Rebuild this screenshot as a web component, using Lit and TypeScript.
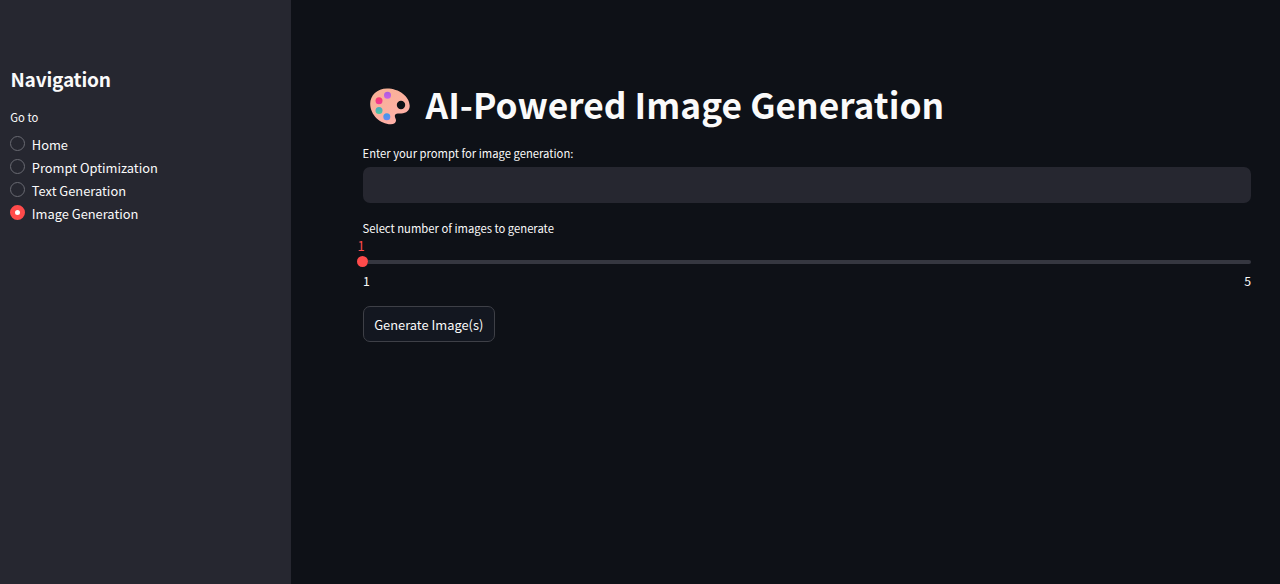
import { LitElement, html, css, svg } from "lit";
import { customElement, state } from "lit/decorators.js";
import { classMap } from "lit/directives/class-map.js";

const palette = svg`
  <defs>
    <linearGradient id="wood" x1="0" y1="0" x2="0.6" y2="1">
      <stop offset="0" stop-color="#f6b193"></stop>
      <stop offset="1" stop-color="#ffb0a8"></stop>
    </linearGradient>
    <linearGradient id="purple" x1="0" y1="0" x2="0" y2="1">
      <stop offset="0" stop-color="#a95ddf"></stop><stop offset="1" stop-color="#cb5fe6"></stop>
    </linearGradient>
    <linearGradient id="pink" x1="0" y1="0" x2="0" y2="1">
      <stop offset="0" stop-color="#f83a6c"></stop><stop offset="1" stop-color="#f03a9c"></stop>
    </linearGradient>
    <linearGradient id="teal" x1="0" y1="0" x2="0" y2="1">
      <stop offset="0" stop-color="#4aa9c0"></stop><stop offset="1" stop-color="#4dc8a0"></stop>
    </linearGradient>
    <linearGradient id="blue" x1="0" y1="0" x2="0" y2="1">
      <stop offset="0" stop-color="#3f9ae8"></stop><stop offset="1" stop-color="#6688f5"></stop>
    </linearGradient>
  </defs>
  <path fill="url(#wood)" fill-rule="evenodd" d="M17 .4C7 .4.2 7.400.2 15.800c0 11 10 20.500 20.600 20.500 3.200 0 5.200-1.400 5.200-3.800 0-1.800-1.200-2.900-1.200-4.500 0-1.700 1.200-2.600 3-2.600h3.500c5 0 8.400-3 8.400-7.600C39.700 8.300 29 .4 17 .4ZM31 12.800a4.200 4.200 0 1 1 0 8.400 4.200 4.200 0 0 1 0-8.400Z"></path>
  <circle cx="17.500" cy="7.300" r="3.500" fill="url(#purple)"></circle>
  <circle cx="9" cy="12.800" r="3.500" fill="url(#pink)"></circle>
  <circle cx="9" cy="22.500" r="3.500" fill="url(#teal)"></circle>
  <circle cx="16.800" cy="28.800" r="3.500" fill="url(#blue)"></circle>
`;

@customElement("app-root")
export class AppRoot extends LitElement {
  @state() private page = "Image Generation";
  private pages = ["Home", "Prompt Optimization", "Text Generation", "Image Generation"];

  static styles = css`
    :host {
      display: flex;
      height: 584px;
      background: #0e1117;
      color: #fafafa;
      font-family: "Noto Sans CJK SC", "Noto Sans", sans-serif;
      font-size: 12.86px;
      overflow: hidden;
    }
    * { box-sizing: border-box; }
    aside {
      width: 290.5px;
      flex: none;
      background: #262730;
      padding: 65px 10px 0;
    }
    h2 {
      margin: 0 0 0 0.5px;
      font-size: 19.1px;
      letter-spacing: -0.2px;
      line-height: 28px;
      font-weight: 600;
    }
    .label { font-size: 11.25px; line-height: 18px; }
    .goto { margin-top: 15px; margin-bottom: 6px; margin-left: 0.3px; }
    .option {
      display: flex;
      align-items: center;
      gap: 6.8px;
      height: 23px;
      white-space: nowrap;
    }
    .option span { margin-top: 1px; }
    .dot {
      width: 15px;
      height: 15px;
      flex: none;
      border-radius: 50%;
      border: 1px solid #696a72;
    }
    .dot.on { border: 5px solid #ff4b4b; background: #fff; }
    main { flex: 1; padding: 79px 29px 0 72px; }
    h1 {
      display: flex;
      align-items: center;
      margin: 0;
      height: 50px;
      font-size: 35.3px;
      letter-spacing: 0.03px;
      line-height: 50px;
      font-weight: 700;
      white-space: nowrap;
    }
    .palette { width: 40px; height: 37px; margin: 4px 16px 0 7px; flex: none; }
    .prompt { margin-top: 15px; }
    .field {
      display: block;
      width: 100%;
      height: 36px;
      margin-top: 4.8px;
      border: 0;
      border-radius: 7px;
      background: #262730;
    }
    .count { margin-top: 16.2px; }
    .value { height: 18px; line-height: 18px; color: #ff4b4b; margin-left: -5px; }
    .slider { display: flex; align-items: center; height: 12px; margin-top: 1px; }
    .thumb {
      width: 11px;
      height: 11px;
      border-radius: 50%;
      background: #ff4b4b;
      margin-left: -5.5px;
      flex: none;
    }
    .track { flex: 1; height: 4px; border-radius: 0 2px 2px 0; background: #353740; }
    .range {
      display: flex;
      justify-content: space-between;
      height: 18px;
      line-height: 18px;
      margin-top: 4px;
      padding-left: 0.5px;
      font-size: 12.3px;
    }
    button {
      display: flex;
      align-items: center;
      justify-content: center;
      margin-top: 16px;
      width: 132.5px;
      height: 36px;
      padding: 1px 0 0;
      border: 1px solid #3e4047;
      border-radius: 7px;
      background: #131720;
      color: inherit;
      font: inherit;
      white-space: nowrap;
    }
  `;

  render() {
    return html`
      <aside>
        <h2>Navigation</h2>
        <div class="label goto">Go to</div>
        ${this.pages.map(
          (name) => html`<div class="option" @click=${() => (this.page = name)}>
            <div class=${classMap({ dot: true, on: name === this.page })}></div>
            <span>${name}</span>
          </div>`
        )}
      </aside>
      <main>
        <h1>
          <svg class="palette" viewBox="0 0 40 37">${palette}</svg>
          <span>AI-Powered Image Generation</span>
        </h1>
        <div class="label prompt">Enter your prompt for image generation:</div>
        <input class="field" />
        <div class="label count">Select number of images to generate</div>
        <div class="value">1</div>
        <div class="slider"><div class="thumb"></div><div class="track"></div></div>
        <div class="range"><span>1</span><span>5</span></div>
        <button>Generate Image(s)</button>
      </main>
    `;
  }
}
